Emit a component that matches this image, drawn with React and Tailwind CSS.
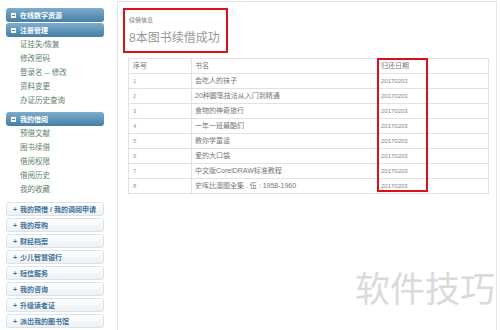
import React from 'react';

const font = { fontFamily: '"Liberation Sans","Noto Sans CJK SC",sans-serif' };

const groups = [
  { title: '在线数字资源', links: [] },
  { title: '注册管理', links: ['证挂失/恢复', '修改密码', '登录名 -- 修改', '资料变更', '办证历史查询'] },
  { title: '我的借阅', links: ['预借文献', '图书续借', '借阅权限', '借阅历史', '我的收藏'] },
];

const collapsed = ['我的预借 / 我的调阅申请', '我的荐购', '财经档案', '少儿智慧银行', '短信服务', '我的咨询', '升级读者证', '派出我的图书馆'];

const books = [
  '会吃人的袜子',
  '20种圆笔技法从入门到精通',
  '食物的神奇旅行',
  '一年一班最酷们',
  '教你学童谣',
  '爱的大口袋',
  '中文版CorelDRAW标准教程',
  '史晖比澳图全集 . 伍 : 1958-1960',
];

// 侧边栏分组标题
const GroupHeader = ({ title }) => (
  <div className="h-[14px] rounded-[3px] bg-gradient-to-b from-[#7eadcb] to-[#447fa5] flex items-center pl-[5px] gap-[4px]">
    <span className="w-[5px] h-[5px] bg-white flex items-center justify-center">
      <span className="w-[3px] h-[1px] bg-[#4a82a8]" />
    </span>
    <span className="text-white text-[7px] font-bold leading-none">{title}</span>
  </div>
);

const Sidebar = () => (
  <div className="w-[98px] ml-[6px] pt-[8px] shrink-0">
    {groups.map((g, i) => (
      <div key={g.title} className={i > 0 ? 'mt-[1px]' : ''}>
        <GroupHeader title={g.title} />
        {g.links.length > 0 && (
          <div className="pl-[14px] pt-[1px] pb-[3px]">
            {g.links.map(l => (
              <div key={l} className="h-[14px] flex items-center text-[7.5px] text-[#62806e] leading-none">
                {l}
              </div>
            ))}
          </div>
        )}
      </div>
    ))}
    <div className="flex flex-col gap-[2px] mt-[2px]">
      {collapsed.map(c => (
        <div
          key={c}
          className="h-[14px] rounded-[3px] border border-[#dbe3ea] bg-gradient-to-b from-white to-[#edf1f4] flex items-center pl-[6px] gap-[3px] text-[7px] font-bold text-[#44729a] leading-none whitespace-nowrap"
        >
          <span className="text-[7px]">+</span>
          <span>{c}</span>
        </div>
      ))}
    </div>
  </div>
);

export default function App() {
  return (
    <div className="relative w-[500px] h-[330px] bg-white overflow-hidden flex" style={font}>
      <Sidebar />
      <div className="ml-[13px] mt-[1px] w-[380px] h-[340px] border-l border-t border-r border-[#e6e6e6] pl-[5px] pt-[6px]">
        <div className="w-[105px] h-[45px] border-2 border-[#d7121b] pl-[4px] pt-[7px]">
          <div className="text-[6px] text-[#777] leading-none">续借信息</div>
          <div className="text-[12px] text-[#999] leading-none mt-[9px]">8本图书续借成功</div>
        </div>
        <div className="relative ml-[5px] mt-[5px] w-[360px]">
          <table className="w-full border-collapse text-[7px] text-[#777] table-fixed">
            <colgroup>
              <col className="w-[63px]" />
              <col className="w-[186px]" />
              <col className="w-[111px]" />
            </colgroup>
            <thead>
              <tr className="h-[15px]">
                <th className="border border-[#e2e2e2] font-normal text-left pl-[4px]">序号</th>
                <th className="border border-[#e2e2e2] font-normal text-left pl-[3px]">书名</th>
                <th className="border border-[#e2e2e2] font-normal text-left pl-[3px]">归还日期</th>
              </tr>
            </thead>
            <tbody>
              {books.map((b, i) => (
                <tr key={i} className="h-[15px]">
                  <td className="border border-[#e2e2e2] pl-[4px] text-[6px] text-[#999]">{i + 1}</td>
                  <td className="border border-[#e2e2e2] pl-[3px] text-[#777] whitespace-nowrap">{b}</td>
                  <td className="border border-[#e2e2e2] pl-[3px] text-[6px] text-[#888]">20170203</td>
                </tr>
              ))}
            </tbody>
          </table>
          <div className="absolute top-0 left-[249px] w-[51px] h-[134px] border-2 border-[#d7121b]" />
        </div>
      </div>
      <div className="absolute left-[355px] top-[272px] text-[35px] leading-none text-[#dadada]">
        软件技巧
      </div>
    </div>
  );
}
